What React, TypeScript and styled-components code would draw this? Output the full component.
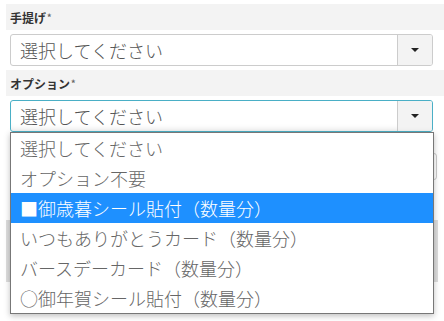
import styled, { createGlobalStyle } from "styled-components";

const GlobalStyle = createGlobalStyle`
  html, body {
    height: 100%;
  }
  body {
    margin: 0;
    background: #fff;
    font-family: "Noto Sans CJK JP", "Noto Sans", sans-serif;
  }
  #root {
    min-height: 100%;
    overflow: hidden;
  }
`

const options = [
  '選択してください',
  'オプション不要',
  '■御歳暮シール貼付（数量分）',
  'いつもありがとうカード（数量分）',
  'バースデーカード（数量分）',
  '○御年賀シール貼付（数量分）',
]

export default function App () {
  return (
    <>
      <GlobalStyle />
      <Form>
        <LabelBand>手提げ<Req>*</Req></LabelBand>
        <FieldRow>
          <Select>
            <SelectText>選択してください</SelectText>
            <Addon><Caret /></Addon>
          </Select>
        </FieldRow>
        <LabelBand>オプション<Req>*</Req></LabelBand>
        <FieldRow>
          <SelectWrap>
            <Select $focused>
              <SelectText>選択してください</SelectText>
              <Addon><Caret /></Addon>
            </Select>
            <Menu>
              {options.map((o, i) => (
                <MenuItem key={o} $active={i === 2}>{o}</MenuItem>
              ))}
            </Menu>
          </SelectWrap>
        </FieldRow>
        <HiddenRow>
          <QtyBox />
        </HiddenRow>
        <HiddenBand />
      </Form>
    </>
  );
}

const Form = styled.div`
  display: flex;
  flex-direction: column;
  gap: 4px;
  padding: 4px 0 40px 6px;
  width: 460px;
`

const LabelBand = styled.div`
  height: 26px;
  background: #f3f3f3;
  display: flex;
  align-items: center;
  padding-left: 4px;
  font-size: 12px;
  font-weight: 700;
  color: #333;
`

const Req = styled.span`
  font-size: 9px;
  color: #666;
  margin-left: 1px;
`

const FieldRow = styled.div`
  padding-left: 4px;
  width: 423px;
`

const SelectWrap = styled.div`
  position: relative;
`

const Select = styled.div<{ $focused?: boolean }>`
  height: 32px;
  box-sizing: border-box;
  display: flex;
  border: 1px solid ${p => p.$focused ? '#4aafc6' : '#ccc'};
  border-radius: 3px;
  background: #fff;
  box-shadow: ${p => p.$focused ? 'inset 0 -6px 6px -4px rgba(0,0,0,.08)' : 'none'};
  overflow: hidden;
`

const SelectText = styled.div`
  flex: 1;
  display: flex;
  align-items: center;
  padding-left: 9px;
  font-size: 18px;
  font-weight: 300;
  color: #555;
`

const Addon = styled.div`
  width: 34px;
  border-left: 1px solid #ccc;
  background: #f3f3f3;
  display: flex;
  align-items: center;
  justify-content: center;
`

const Caret = styled.span`
  width: 0;
  height: 0;
  border-left: 4px solid transparent;
  border-right: 4px solid transparent;
  border-top: 4px solid #222;
`

const Menu = styled.div`
  position: absolute;
  top: 32px;
  left: 0;
  right: -1px;
  border: 1px solid #777;
  background: #fff;
  box-shadow: 0 2px 6px rgba(0,0,0,.25);
  z-index: 2;
`

const MenuItem = styled.div<{ $active?: boolean }>`
  height: 30px;
  display: flex;
  align-items: center;
  padding-left: 9px;
  font-size: 18px;
  font-weight: 300;
  color: ${p => p.$active ? '#fff' : '#666'};
  background: ${p => p.$active ? '#1e90ff' : 'transparent'};
`

const HiddenRow = styled.div`
  display: flex;
  justify-content: flex-end;
  width: 431px;
  padding-top: 17px;
`

const QtyBox = styled.div`
  width: 80px;
  height: 25px;
  border: 1px solid #ccc;
  border-radius: 3px;
`

const HiddenBand = styled.div`
  margin-top: 36px;
  width: 432px;
  height: 62px;
  background: #ddd;
`
